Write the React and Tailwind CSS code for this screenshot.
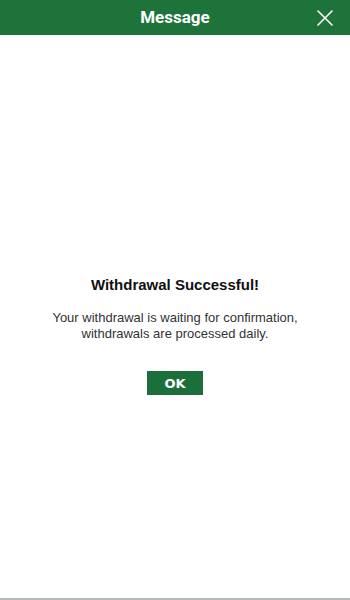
export default function App() {
  return (
    <div className="flex h-[600px] w-full flex-col bg-white font-['Liberation_Sans',Arial,sans-serif]">
      <header className="relative flex h-[35px] shrink-0 items-center justify-center bg-[#1d7339]">
        <h1 className="pt-[1px] font-['Roboto',sans-serif] text-[17px] font-bold text-white">Message</h1>
        <button
          type="button"
          aria-label="Close"
          className="absolute right-[16px] top-[9px] flex h-[18px] w-[18px] items-center justify-center"
        >
          <svg viewBox="0 0 18 18" className="h-[18px] w-[18px]" fill="none" stroke="white" strokeWidth="1.6" strokeLinecap="round">
            <path d="M2 2L16 16M16 2L2 16" />
          </svg>
        </button>
      </header>

      <main className="flex flex-1 flex-col items-center justify-center px-6 pt-[36px] text-center">
        <h2 className="text-[15px] font-bold text-[#111]">Withdrawal Successful!</h2>
        <p className="mt-[14px] text-[13px] leading-[16px] text-[#333]">
          Your withdrawal is waiting for confirmation,
          <br />
          withdrawals are processed daily.
        </p>
        <button
          type="button"
          className="mt-[29px] flex h-[24px] w-[56px] items-center justify-center bg-[#1b6f3a] font-['DejaVu_Sans',sans-serif] text-[13px] font-bold text-white"
        >
          OK
        </button>
      </main>

      <div className="h-[2px] shrink-0 bg-[#b5bab8]" />
    </div>
  );
}
